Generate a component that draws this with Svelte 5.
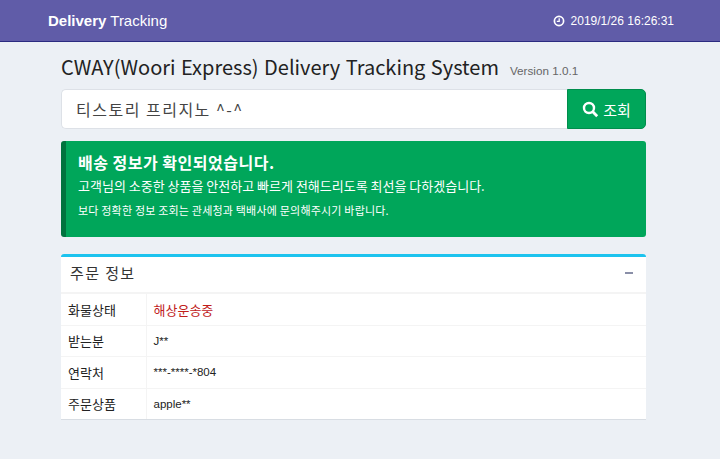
<script>
  const rows = [
    { label: "화물상태", value: "해상운송중", status: true },
    { label: "받는분", value: "J**" },
    { label: "연락처", value: "***-****-*804" },
    { label: "주문상품", value: "apple**" },
  ];
</script>

<header class="topbar">
  <div class="brand"><b>Delivery</b> Tracking</div>
  <div class="clock">
    <svg width="12" height="12" viewBox="0 0 12 12" fill="none" stroke="white">
      <circle cx="6" cy="6" r="4.6" stroke-width="1.7" />
      <path d="M6.2 3.2V6.3H3.8" stroke-width="1.3" />
    </svg>
    <span>2019/1/26 16:26:31</span>
  </div>
</header>

<main class="content">
  <div class="title">
    <h1>CWAY(Woori Express) Delivery Tracking System</h1>
    <small>Version 1.0.1</small>
  </div>

  <div class="search">
    <input value="티스토리 프리지노 ^-^" />
    <button>
      <svg width="17" height="17" viewBox="0 0 17 17" fill="none" stroke="white">
        <circle cx="7" cy="7" r="5" stroke-width="2.4" />
        <path d="M10.8 10.8L15.2 15.2" stroke-width="2.8" />
      </svg>
      <span>조회</span>
    </button>
  </div>

  <section class="callout">
    <h4>배송 정보가 확인되었습니다.</h4>
    <p class="lead">고객님의 소중한 상품을 안전하고 빠르게 전해드리도록 최선을 다하겠습니다.</p>
    <p class="note">보다 정확한 정보 조회는 관세청과 택배사에 문의해주시기 바랍니다.</p>
  </section>

  <section class="box">
    <div class="box-header">
      <h3>주문 정보</h3>
      <span class="minus"></span>
    </div>
    <table>
      <tbody>
        {#each rows as row}
          <tr>
            <th>{row.label}</th>
            <td class:status={row.status}>{row.value}</td>
          </tr>
        {/each}
      </tbody>
    </table>
  </section>
</main>

<style>
  :global(body) {
    background: #ecf0f5;
    font-family: "Liberation Sans", "Noto Sans CJK KR", sans-serif;
    color: #222;
  }

  .topbar {
    display: flex;
    align-items: center;
    justify-content: space-between;
    height: 41px;
    padding: 0 46px 0 48px;
    background: #605ca8;
    border-bottom: 1px solid #2b2a80;
    color: white;
  }

  .brand {
    font-size: 15px;
  }

  .clock {
    display: flex;
    align-items: center;
    gap: 6px;
    font-size: 12px;
  }

  .content {
    width: 585px;
    margin-left: 61px;
    padding-top: 11px;
  }

  .title {
    display: flex;
    align-items: baseline;
    gap: 11px;
    height: 30px;
  }

  h1 {
    margin: 0;
    font-family: "Noto Sans CJK KR", sans-serif;
    font-size: 20px;
    font-weight: 400;
    line-height: 27px;
    word-spacing: 1px;
    color: #222;
    white-space: nowrap;
  }

  small {
    font-size: 11.7px;
    color: #666;
  }

  .search {
    display: flex;
    height: 40px;
    margin-top: 6px;
  }

  input {
    flex: 1;
    min-width: 0;
    box-sizing: border-box;
    padding: 0 14px;
    background: white;
    border: 1px solid #dde1e7;
    border-right: none;
    border-radius: 5px 0 0 5px;
    font-family: "Noto Sans CJK KR", sans-serif;
    font-size: 16px;
    letter-spacing: 1.5px;
    color: #444;
  }

  button {
    display: flex;
    align-items: center;
    justify-content: center;
    gap: 4px;
    width: 79px;
    padding: 0;
    background: #00a65a;
    border: 1px solid #008d4c;
    border-radius: 0 5px 5px 0;
    font-family: "Noto Sans CJK KR", sans-serif;
    font-size: 15px;
    color: white;
  }

  .callout {
    box-sizing: border-box;
    height: 96px;
    margin-top: 12px;
    padding: 10px 12px 0 12px;
    background: #00a65a;
    border-left: 5px solid #00733e;
    border-radius: 3px;
    color: white;
  }

  h4 {
    margin: 0;
    font-family: "Noto Sans CJK KR", sans-serif;
    font-size: 16px;
    font-weight: 700;
    letter-spacing: 0.5px;
    line-height: 22px;
  }

  .lead {
    margin: 5px 0 0;
    font-family: "Noto Sans CJK KR", sans-serif;
    font-size: 13px;
    line-height: 16px;
  }

  .note {
    margin: 9px 0 0;
    font-family: "Noto Sans CJK KR", sans-serif;
    font-size: 11px;
    letter-spacing: 0.2px;
    line-height: 14px;
  }

  .box {
    margin-top: 17px;
    background: white;
    border-top: 3px solid #1cc3ee;
    border-bottom: 1px solid #d8dde3;
    border-radius: 3px 3px 0 0;
  }

  .box-header {
    display: flex;
    align-items: center;
    justify-content: space-between;
    box-sizing: border-box;
    height: 37px;
    padding: 0 13px 4px 9px;
    border-bottom: 2px solid #f4f4f4;
  }

  h3 {
    margin: 0;
    font-family: "Noto Sans CJK KR", sans-serif;
    font-size: 15px;
    font-weight: 400;
    letter-spacing: 1.4px;
    color: #333;
  }

  .minus {
    width: 8px;
    height: 2px;
    background: #8a8fa8;
  }

  table {
    width: 100%;
    border-collapse: collapse;
    font-size: 11.5px;
  }

  tr + tr {
    border-top: 1px solid #f4f4f4;
  }

  th,
  td {
    height: 30.5px;
    padding: 0 7px 0 6.5px;
    text-align: left;
    font-weight: 400;
    font-family: "Liberation Sans", "Noto Sans CJK KR", sans-serif;
  }

  th {
    width: 71px;
    padding-left: 7px;
    font-size: 13px;
    border-right: 1px solid #f4f4f4;
  }

  .status {
    color: #c0201a;
    font-size: 13px;
  }
</style>
